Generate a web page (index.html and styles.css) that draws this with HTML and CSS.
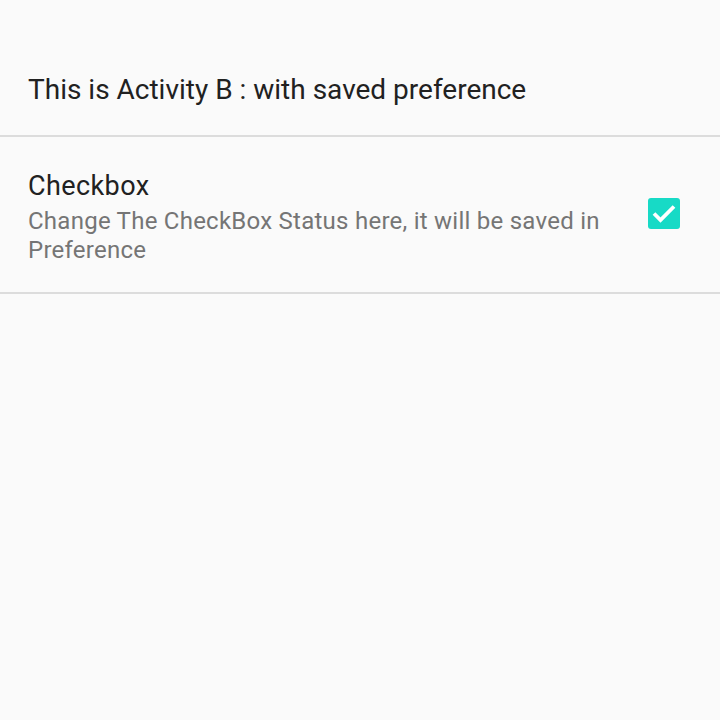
FILE: index.html
```html
<!DOCTYPE html>
<html>
<head>
<meta charset="utf-8">
<link rel="stylesheet" href="styles.css">
</head>
<body>
<div class="screen">
  <div class="category">This is Activity B : with saved preference</div>
  <div class="pref">
    <div class="texts">
      <div class="title">Checkbox</div>
      <div class="summary">Change The CheckBox Status here, it will be saved in Preference</div>
    </div>
    <div class="check">
      <svg width="32" height="31" viewBox="0 0 32 31">
        <rect x="0" y="0" width="32" height="31" rx="3" fill="#17dac6"/>
        <path d="M6 15.5 L12.5 22 L26 8.5" fill="none" stroke="#ffffff" stroke-width="3.8"/>
      </svg>
    </div>
  </div>
</div>
</body>
</html>
```
FILE: styles.css
```css
html, body {
  margin: 0;
  padding: 0;
  background: #fafafa;
}
.screen {
  width: 720px;
  height: 720px;
  background: #fafafa;
  font-family: Roboto, "Noto Sans", sans-serif;
}
.category {
  height: 137px;
  box-sizing: border-box;
  padding: 72px 0 0 28px;
  font-size: 28px;
  line-height: 36px;
  color: #212121;
  border-bottom: 2px solid #dcdcdc;
}
.pref {
  display: flex;
  align-items: flex-start;
  height: 155px;
  box-sizing: content-box;
  padding: 0 40px 0 28px;
  border-bottom: 2px solid #dcdcdc;
}
.texts {
  flex: 1;
  padding-top: 33px;
}
.title {
  font-size: 27px;
  line-height: 32px;
  letter-spacing: 0.4px;
  color: #212121;
}
.summary {
  margin-top: 5px;
  font-size: 24px;
  line-height: 29px;
  letter-spacing: 0.25px;
  color: #757575;
  width: 590px;
}
.check {
  display: flex;
  margin-left: 20px;
  margin-top: 61px;
}
```
